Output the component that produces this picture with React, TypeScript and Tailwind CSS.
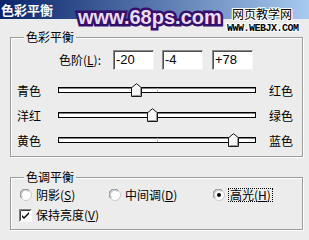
import React from "react";

const CJK = "font-['Noto_Sans_CJK_SC',sans-serif]";

const sliders = [
  { l: "青色", r: "红色", v: -20 },
  { l: "洋红", r: "绿色", v: -4 },
  { l: "黄色", r: "蓝色", v: 78 },
];

function Thumb({ v }: { v: number }) {
  const left = ((v + 100) / 200) * 197 - 5.5;
  return (
    <svg
      className="absolute top-0"
      style={{ left }}
      width="11"
      height="14"
      viewBox="0 0 11 14"
    >
      <path d="M0.5 13.5 V4.8 L5.5 0.7 L10.5 4.8 V13.5 Z" fill="#f6f6f6" stroke="#1a1a1a" strokeWidth="1" />
      <path d="M9.5 5.2 V12.5 H1.5" fill="none" stroke="#9a9a9a" strokeWidth="1" />
    </svg>
  );
}

function Radio({ checked }: { checked?: boolean }) {
  return (
    <svg width="12" height="12" viewBox="0 0 12 12" className="shrink-0">
      <circle cx="6" cy="6" r="5.5" fill="#ffffff" stroke="#c8c8c8" />
      <path d="M1.6 9.2 A5 5 0 0 1 9.2 1.6" fill="none" stroke="#808080" strokeWidth="1" />
      <path d="M2.6 8.4 A4 4 0 0 1 8.4 2.6" fill="none" stroke="#c0c0c0" strokeWidth="1" />
      {checked && <circle cx="6" cy="6" r="2" fill="#000" />}
    </svg>
  );
}

function Checkbox() {
  return (
    <svg width="13" height="13" viewBox="0 0 13 13" className="shrink-0">
      <rect x="0" y="0" width="13" height="13" fill="#ffffff" />
      <path d="M0.5 12.5 V0.5 H12.5" fill="none" stroke="#808080" />
      <path d="M1.5 11.5 V1.5 H11.5" fill="none" stroke="#404040" />
      <path d="M3 6 L5 8 L10 3 V5 L5 10 L3 8 Z" fill="#000" />
    </svg>
  );
}

function Input({ value, className = "" }: { value: string; className?: string }) {
  return (
    <div
      className={`w-[41px] h-[20px] bg-white border border-t-[#8a8a8a] border-l-[#8a8a8a] border-r-[#f4f4f4] border-b-[#f4f4f4] shadow-[inset_1px_1px_0_#505050] pl-[2px] text-[13px] leading-[18px] text-black font-['Liberation_Sans',Arial,sans-serif] ${className}`}
    >
      {value}
    </div>
  );
}

function Group({
  title,
  className,
  children,
}: {
  title: string;
  className: string;
  children: React.ReactNode;
}) {
  return (
    <div
      className={`relative ml-[10px] w-[293px] border border-[#9c9c9c] shadow-[inset_1px_1px_0_#ffffff,1px_1px_0_#ffffff] ${className}`}
    >
      <span className="absolute -top-[8px] left-[13px] px-[2px] bg-[#ececec] text-[12px] leading-[14px] text-black">
        {title}
      </span>
      {children}
    </div>
  );
}

export default function App() {
  return (
    <div className={`relative w-[309px] h-[240px] overflow-hidden bg-[#ececec] ${CJK}`}>
      {/* Title bar */}
      <div className="h-[19px] bg-[linear-gradient(to_right,#0a246a,#a6caf0)] pl-px text-[13px] font-bold leading-[19px] text-white">
        色彩平衡
      </div>

      {/* Colour balance group */}
      <Group title="色彩平衡" className="mt-[18px] h-[120px] pt-[12px]">
        <div className="flex h-[20px] items-center">
          <div className="ml-[48px] w-[54px] text-[12px] leading-[14px] text-black">
            色阶(<span className="underline">L</span>):
          </div>
          <Input value="-20" />
          <Input value="-4" className="ml-[8px]" />
          <Input value="+78" className="ml-[9px]" />
        </div>
        <div className="mt-[8px] flex flex-col">
          {sliders.map((s) => (
            <div key={s.l} className="flex h-[25px] items-start pl-[6px]">
              <div className="mt-[6px] w-[41px] text-[12px] leading-[14px] text-black">{s.l}</div>
              <div className="relative mt-[5px] h-[14px] w-[198px]">
                <div className="relative mt-[4px] h-[6px] border border-black bg-white shadow-[inset_0_1px_0_#808080]">
                  <div className="absolute left-[98px] top-0 bottom-0 w-px bg-[#c4c4c4]" />
                </div>
                <Thumb v={s.v} />
              </div>
              <div className="ml-[13px] mt-[6px] text-[12px] leading-[14px] text-black">{s.r}</div>
            </div>
          ))}
        </div>
      </Group>

      {/* Tone balance group */}
      <Group title="色调平衡" className="mt-[20px] h-[53px] pt-[9px]">
        <div className="flex h-[16px] items-center pl-[9px] text-[12px] leading-[14px] text-black">
          <div className="flex w-[89px] items-center gap-[4px]">
            <Radio />
            <span>
              阴影(<span className="underline">S</span>)
            </span>
          </div>
          <div className="flex w-[104px] items-center gap-[4px]">
            <Radio />
            <span>
              中间调(<span className="underline">D</span>)
            </span>
          </div>
          <div className="flex items-center gap-[3px]">
            <Radio checked />
            <span className="border border-dotted border-black px-px leading-[12px]">
              高光(<span className="underline">H</span>)
            </span>
          </div>
        </div>
        <div className="mt-[4px] flex h-[16px] items-center gap-[4px] pl-[8px] text-[12px] leading-[14px] text-black">
          <Checkbox />
          <span>
            保持亮度(<span className="underline">V</span>)
          </span>
        </div>
      </Group>

      {/* Watermarks */}
      <div className="pointer-events-none absolute left-[78px] top-[7px] text-[20px] font-bold leading-[20px] text-[#eadcf6] font-['Liberation_Sans',Arial,sans-serif] [-webkit-text-stroke:5px_#34106c] [paint-order:stroke_fill]">
        www.68ps.com
      </div>
      <div className="pointer-events-none absolute left-[232px] top-[8px] text-[12px] leading-[12px] text-black [text-shadow:1px_0_0_#fff,-1px_0_0_#fff,0_1px_0_#fff,0_-1px_0_#fff,1px_1px_0_#fff,-1px_-1px_0_#fff,1px_-1px_0_#fff,-1px_1px_0_#fff]">
        网页教学网
      </div>
      <div className="pointer-events-none absolute left-[227px] top-[24px] text-[10px] font-bold leading-[10px] tracking-[-0.5px] text-black font-['Liberation_Mono',monospace] [text-shadow:1px_0_0_#fff,-1px_0_0_#fff,0_1px_0_#fff,0_-1px_0_#fff,1px_1px_0_#fff,-1px_-1px_0_#fff,1px_-1px_0_#fff,-1px_1px_0_#fff]">
        WWW.WEBJX.COM
      </div>
    </div>
  );
}
